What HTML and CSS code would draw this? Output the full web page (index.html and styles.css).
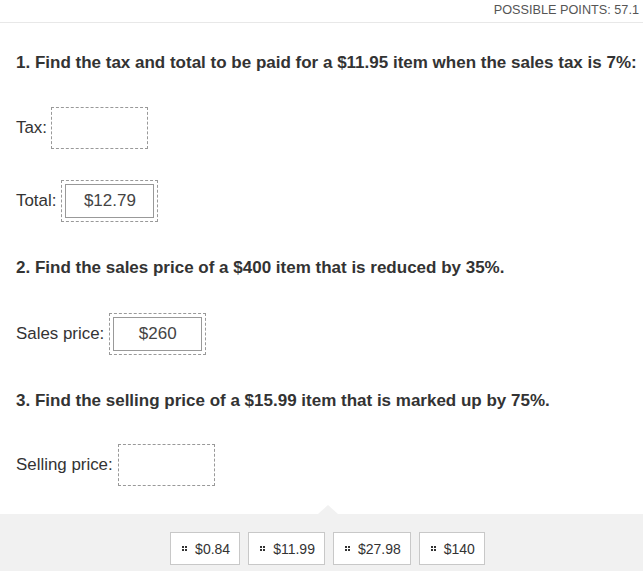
FILE: index.html
```html
<!DOCTYPE html>
<html>
<head>
<meta charset="utf-8">
<link rel="stylesheet" href="styles.css">
</head>
<body>
<div class="header">POSSIBLE POINTS: 57.1</div>
<div class="content">
  <div class="question q1">1. Find the tax and total to be paid for a $11.95 item when the sales tax is 7%:</div>
  <div class="row r-tax"><span class="label">Tax:</span><span class="drop"></span></div>
  <div class="row r-total"><span class="label">Total:</span><span class="drop filled"><span class="inner">$12.79</span></span></div>
  <div class="question q2">2. Find the sales price of a $400 item that is reduced by 35%.</div>
  <div class="row r-sales"><span class="label">Sales price:</span><span class="drop filled"><span class="inner">$260</span></span></div>
  <div class="question q3">3. Find the selling price of a $15.99 item that is marked up by 75%.</div>
  <div class="row r-sell"><span class="label">Selling price:</span><span class="drop"></span></div>
</div>
<div class="tray">
  <div class="chip"><span class="grip"><i></i><i></i><i></i><i></i></span>$0.84</div>
  <div class="chip"><span class="grip"><i></i><i></i><i></i><i></i></span>$11.99</div>
  <div class="chip"><span class="grip"><i></i><i></i><i></i><i></i></span>$27.98</div>
  <div class="chip"><span class="grip"><i></i><i></i><i></i><i></i></span>$140</div>
</div>
</body>
</html>
```
FILE: styles.css
```css
html, body {
  margin: 0;
  padding: 0;
  background: #fff;
  font-family: "Liberation Sans", Arial, sans-serif;
  color: #333;
  height: 571px;
  overflow: hidden;
}
body {
  display: flex;
  flex-direction: column;
}
.header {
  height: 22px;
  line-height: 21px;
  border-bottom: 1px solid #e8e8e8;
  text-align: right;
  padding-right: 4px;
  font-size: 12.7px;
  color: #555;
  white-space: nowrap;
}
.content {
  flex: 1;
  padding-left: 16px;
  display: flex;
  flex-direction: column;
  align-items: flex-start;
}
.question {
  font-size: 17px;
  font-weight: bold;
  line-height: 20px;
  white-space: nowrap;
  color: #333;
}
.q1 { margin-top: 30px; }
.q2 { margin-top: 36px; }
.q3 { margin-top: 36px; }
.row {
  display: flex;
  align-items: center;
  gap: 4px;
  font-size: 16.9px;
  color: #333;
}
.r-tax { margin-top: 34px; }
.r-total { margin-top: 31px; gap: 5px; }
.r-sales { margin-top: 35px; gap: 5px; }
.r-sell { margin-top: 33px; gap: 5px; }
.drop {
  box-sizing: border-box;
  width: 97px;
  height: 42px;
  border: 1px dashed #999;
  display: flex;
  padding: 3px;
}
.inner {
  flex: 1;
  border: 1px solid #999;
  display: flex;
  align-items: center;
  justify-content: center;
  font-size: 17px;
  color: #444;
}
.tray {
  position: relative;
  height: 57px;
  background: #f1f1f1;
  display: flex;
  justify-content: center;
  align-items: flex-start;
  gap: 8px;
  padding-top: 18px;
  padding-left: 12px;
  box-sizing: border-box;
}
.tray::before {
  content: "";
  position: absolute;
  top: -9px;
  left: 318px;
  border-left: 10px solid transparent;
  border-right: 10px solid transparent;
  border-bottom: 9px solid #f1f1f1;
}
.chip {
  box-sizing: border-box;
  height: 33px;
  background: #fff;
  border: 1px solid #c8c8c8;
  display: flex;
  align-items: center;
  padding: 0 9px 0 11px;
  font-size: 14px;
  color: #333;
}
.grip {
  display: grid;
  grid-template-columns: 2px 2px;
  grid-template-rows: 2px 2px;
  gap: 1px;
  margin-right: 8px;
}
.grip i {
  display: block;
  background: #333;
}
```
